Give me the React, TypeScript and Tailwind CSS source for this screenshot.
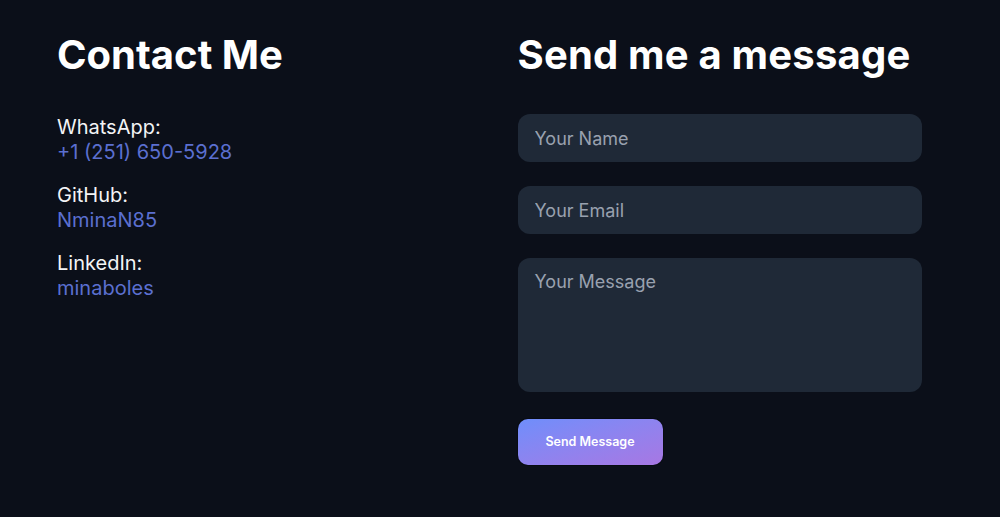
export default function App() {
  return (
    <div
      className="min-h-[517px] w-full bg-[#0b0f19] text-white"
      style={{ fontFamily: "Inter, 'Noto Sans', sans-serif" }}
    >
      <div className="grid w-[922px] grid-cols-2 gap-14 pl-[57px] pt-[30px]">
        <div>
          <h2 className="text-[40px] font-bold leading-[50px]">Contact Me</h2>
          <div className="mt-[35px] flex flex-col gap-[18px] text-[20px] leading-[25px]">
            <div>
              <p className="text-gray-100">WhatsApp:</p>
              <a className="text-[#5b6fd0]">+1 (251) 650-5928</a>
            </div>
            <div>
              <p className="text-gray-100">GitHub:</p>
              <a className="text-[#5b6fd0]">NminaN85</a>
            </div>
            <div>
              <p className="text-gray-100">LinkedIn:</p>
              <a className="text-[#5b6fd0]">minaboles</a>
            </div>
          </div>
        </div>
        <div>
          <h2 className="text-[40px] font-bold leading-[50px] tracking-[0.2px]">Send me a message</h2>
          <form className="mt-[34px] flex flex-col gap-6">
            <input
              placeholder="Your Name"
              className="h-12 w-full rounded-xl bg-[#1f2937] px-[17px] text-lg text-white placeholder:text-gray-400 focus:outline-none"
            />
            <input
              placeholder="Your Email"
              className="h-12 w-full rounded-xl bg-[#1f2937] px-[17px] text-lg text-white placeholder:text-gray-400 focus:outline-none"
            />
            <textarea
              placeholder="Your Message"
              className="h-[134px] w-full resize-none rounded-xl bg-[#1f2937] px-[17px] py-[10px] text-lg text-white placeholder:text-gray-400 focus:outline-none"
            />
            <button
              type="button"
              className="mt-[3px] h-[46px] w-[145px] rounded-[10px] bg-gradient-to-br from-[#6e8efb] to-[#a777e3] text-[12.5px] font-semibold text-white shadow-[0_0_0_1px_rgba(0,0,0,0.25)]"
            >
              Send Message
            </button>
          </form>
        </div>
      </div>
    </div>
  );
}
